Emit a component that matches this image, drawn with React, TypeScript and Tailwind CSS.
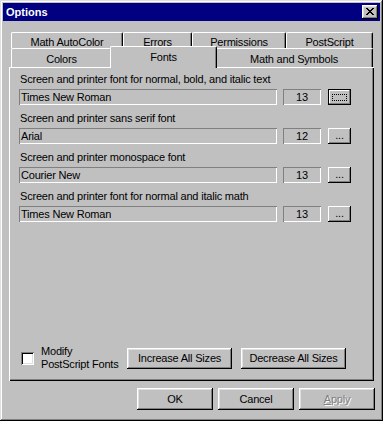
import React from 'react'

const rows = [
  { label: 'Screen and printer font for normal, bold, and italic text', font: 'Times New Roman', size: '13', focused: true },
  { label: 'Screen and printer sans serif font', font: 'Arial', size: '12', focused: false },
  { label: 'Screen and printer monospace font', font: 'Courier New', size: '13', focused: false },
  { label: 'Screen and printer font for normal and italic math', font: 'Times New Roman', size: '13', focused: false },
]

// classic 8x7 close glyph
const closeGlyph = [
  'XX....XX',
  '.XX..XX.',
  '..XXXX..',
  '...XX...',
  '..XXXX..',
  '.XX..XX.',
  'XX....XX',
]

function CloseButton() {
  return (
    <div className="flex h-[14px] w-[16px] items-center justify-center bg-[#c0c0c0] shadow-[inset_-1px_-1px_#000,inset_1px_1px_#fff,inset_-2px_-2px_#808080,inset_2px_2px_#dfdfdf]">
      <svg width="8" height="7" viewBox="0 0 8 7" shapeRendering="crispEdges" className="-mt-[1px]">
        {closeGlyph.map((line, y) =>
          line.split('').map((c, x) => (c === 'X' ? <rect key={`${x}-${y}`} x={x} y={y} width="1" height="1" fill="#000" /> : null)),
        )}
      </svg>
    </div>
  )
}

function BackTab({ label, w }: { label: string; w: string }) {
  return (
    <div
      className={`${w} flex h-full items-center justify-center rounded-t-[2px] border-l border-t border-r border-l-white border-t-white border-r-black pt-[2px] shadow-[inset_-1px_0_#808080]`}
    >
      {label}
    </div>
  )
}

function Field({ children, w, center }: { children: React.ReactNode; w: string; center?: boolean }) {
  return (
    <div
      className={`${w} flex h-[16px] items-center bg-[#c0c0c0] shadow-[inset_1px_1px_#808080,inset_-1px_-1px_#fff] ${center ? 'justify-center' : 'pl-[2px]'}`}
    >
      {children}
    </div>
  )
}

export default function App() {
  return (
    <div className="flex h-[421px] w-[383px] flex-col bg-[#c0c0c0] p-[3px] font-['Liberation_Sans',Arial,sans-serif] text-[11px] leading-[14px] tracking-[-0.2px] text-black shadow-[inset_-1px_-1px_#000,inset_1px_1px_#dfdfdf,inset_-2px_-2px_#808080,inset_2px_2px_#fff]">
      {/* title bar */}
      <div className="flex h-[18px] shrink-0 items-center justify-between bg-[#000080] pl-[3px] pr-[2px]">
        <span className="text-[11px] font-bold tracking-normal text-white">Options</span>
        <CloseButton />
      </div>

      {/* tabs */}
      <div className="ml-[8px] mt-[11px] w-[362px] shrink-0">
        <div className="flex h-[16px]">
          <BackTab label="Math AutoColor" w="w-[112px]" />
          <BackTab label="Errors" w="w-[69px]" />
          <BackTab label="Permissions" w="w-[94px]" />
          <BackTab label="PostScript" w="w-[87px]" />
        </div>
        <div className="flex h-[19px] items-end">
          <BackTab label="Colors" w="w-[101px]" />
          <div className="relative z-10 -mx-[2px] -mb-[1px] flex h-[22px] w-[107px] items-start justify-center rounded-t-[2px] border-l border-t border-r border-l-white border-t-white border-r-black bg-[#c0c0c0] pt-[3px] shadow-[inset_-1px_0_#808080]">
            Fonts
          </div>
          <BackTab label="Math and Symbols" w="w-[158px]" />
        </div>
      </div>

      {/* panel */}
      <div className="ml-[6px] flex h-[314px] w-[365px] shrink-0 flex-col pl-[10px] pt-[5px] pb-[10px] shadow-[inset_1px_1px_#fff,inset_-1px_-1px_#000,inset_-2px_-2px_#808080]">
        <div className="flex flex-col gap-[6px]">
          {rows.map((r) => (
            <div key={r.label} className="flex flex-col">
              <div className="h-[14px] pl-[1px]">{r.label}</div>
              <div className="mt-[3px] flex h-[16px]">
                <Field w="w-[258px]">{r.font}</Field>
                <div className="ml-[6px]">
                  <Field w="w-[38px]" center>
                    {r.size}
                  </Field>
                </div>
                {r.focused ? (
                  <div className="ml-[7px] flex h-[16px] w-[23px] items-center justify-center border border-black bg-[#c0c0c0] shadow-[inset_-1px_-1px_#808080,inset_1px_1px_#fff]">
                    <span className="h-[7px] w-[15px] border border-dotted border-black" />
                  </div>
                ) : (
                  <div className="ml-[7px] flex h-[16px] w-[23px] items-center justify-center bg-[#c0c0c0] pb-[3px] shadow-[inset_-1px_-1px_#000,inset_1px_1px_#fff,inset_-2px_-2px_#808080]">
                    ...
                  </div>
                )}
              </div>
            </div>
          ))}
        </div>

        <div className="mt-auto flex items-center pl-[2px]">
          <div className="h-[13px] w-[13px] bg-white shadow-[inset_1px_1px_#808080,inset_-1px_-1px_#fff,inset_2px_2px_#000,inset_-2px_-2px_#dfdfdf]" />
          <div className="ml-[7px] flex w-[86px] flex-col leading-[13px]">
            <span>Modify</span>
            <span>PostScript Fonts</span>
          </div>
          <div className="flex h-[21px] w-[105px] items-center justify-center bg-[#c0c0c0] shadow-[inset_-1px_-1px_#000,inset_1px_1px_#fff,inset_-2px_-2px_#808080,inset_2px_2px_#dfdfdf]">
            Increase All Sizes
          </div>
          <div className="ml-[9px] flex h-[21px] w-[105px] items-center justify-center bg-[#c0c0c0] shadow-[inset_-1px_-1px_#000,inset_1px_1px_#fff,inset_-2px_-2px_#808080,inset_2px_2px_#dfdfdf]">
            Decrease All Sizes
          </div>
        </div>
      </div>

      {/* dialog buttons */}
      <div className="mt-[7px] flex justify-end gap-[5px] pr-[5px]">
        <div className="flex h-[22px] w-[76px] items-center justify-center bg-[#c0c0c0] shadow-[inset_-1px_-1px_#000,inset_1px_1px_#fff,inset_-2px_-2px_#808080,inset_2px_2px_#dfdfdf]">
          OK
        </div>
        <div className="flex h-[22px] w-[76px] items-center justify-center bg-[#c0c0c0] shadow-[inset_-1px_-1px_#000,inset_1px_1px_#fff,inset_-2px_-2px_#808080,inset_2px_2px_#dfdfdf]">
          Cancel
        </div>
        <div className="flex h-[22px] w-[76px] items-center justify-center bg-[#c0c0c0] text-[#808080] shadow-[inset_-1px_-1px_#000,inset_1px_1px_#fff,inset_-2px_-2px_#808080,inset_2px_2px_#dfdfdf] [text-shadow:1px_1px_#fff]">
          <span>
            <span className="underline">A</span>pply
          </span>
        </div>
      </div>
    </div>
  )
}
